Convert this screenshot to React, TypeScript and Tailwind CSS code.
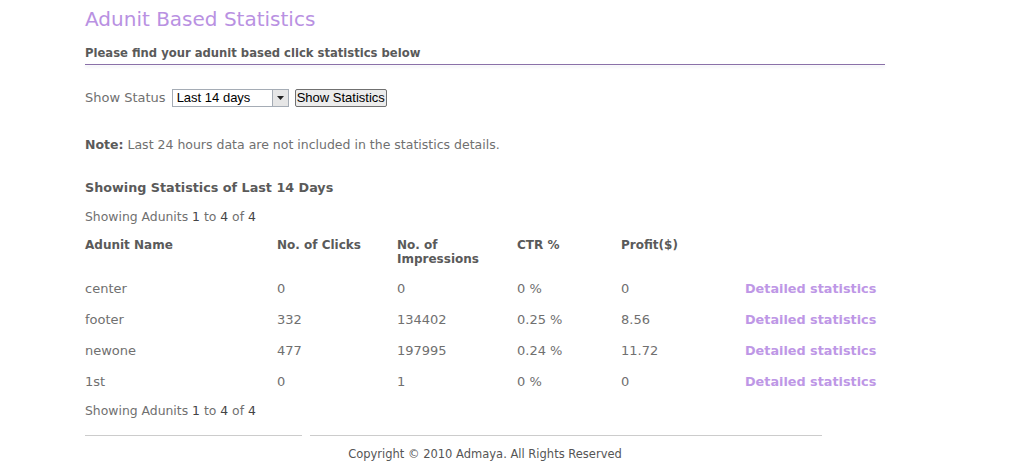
import React from 'react';

const rows = [
  { name: 'center', clicks: '0', imps: '0', ctr: '0 %', profit: '0' },
  { name: 'footer', clicks: '332', imps: '134402', ctr: '0.25 %', profit: '8.56' },
  { name: 'newone', clicks: '477', imps: '197995', ctr: '0.24 %', profit: '11.72' },
  { name: '1st', clicks: '0', imps: '1', ctr: '0 %', profit: '0' },
];

function App() {
  return (
    <div className="min-h-screen bg-white text-[13px] text-[#707070]" style={{ fontFamily: '"DejaVu Sans", Verdana, sans-serif' }}>
      <div className="w-[800px] ml-[85px]">
        <h1 className="pt-[6px] text-[20px] leading-[26px] text-[#b991e2]">Adunit Based Statistics</h1>
        <h2 className="mt-[13px] text-[11.6px] leading-[16px] font-bold text-[#5a5a5a]">Please find your adunit based click statistics below</h2>
        <div className="mt-[3px] h-px bg-[#8a70a8] shadow-[0_2px_3px_#e0e0ec]" />

        <div className="mt-[24px] flex items-center h-[18px]">
          <span>Show Status</span>
          <div className="ml-[6px] flex items-center w-[117px] h-[18px] border border-[#a5acb5] bg-white">
            <span className="flex-1 pl-[4px] text-[13px] text-black" style={{ fontFamily: '"Liberation Sans", Arial, sans-serif' }}>Last 14 days</span>
            <span className="w-[16px] h-[16px] flex items-center justify-center bg-[#e6e6e6] border-l border-[#a5acb5]">
              <svg width="7" height="4" viewBox="0 0 7 4"><path d="M0 0h7L3.5 4z" fill="#222" /></svg>
            </span>
          </div>
          <button className="ml-[6px] h-[18px] px-[1px] border border-[#707070] rounded-[2px] bg-[#ececec] text-[13px] leading-[14px] text-black" style={{ fontFamily: '"Liberation Sans", Arial, sans-serif' }}>Show Statistics</button>
        </div>

        <p className="mt-[29px] text-[12.5px] leading-[18px]"><b className="text-[#5a5a5a]">Note:</b> Last 24 hours data are not included in the statistics details.</p>

        <h3 className="mt-[25px] text-[12.75px] leading-[18px] font-bold text-[#5a5a5a]">Showing Statistics of Last 14 Days</h3>
        <p className="mt-[11px] text-[12.4px] leading-[18px]">Showing Adunits <span className="text-[#444]">1</span> to <span className="text-[#444]">4</span> of <span className="text-[#444]">4</span></p>

        <div className="mt-[12px] grid grid-cols-[192px_120px_120px_104px_124px_1fr] font-bold text-[12px] leading-[14px] text-[#5a5a5a]">
          <div>Adunit Name</div>
          <div>No. of Clicks</div>
          <div>No. of<br />Impressions</div>
          <div>CTR %</div>
          <div>Profit($)</div>
          <div />
        </div>

        <div className="mt-[7px]">
          {rows.map((r) => (
            <div key={r.name} className="grid grid-cols-[192px_120px_120px_104px_124px_1fr] h-[31px] items-center">
              <div>{r.name}</div>
              <div>{r.clicks}</div>
              <div>{r.imps}</div>
              <div>{r.ctr}</div>
              <div>{r.profit}</div>
              <div className="font-bold text-[12.8px] text-[#be97e6]">Detailed statistics</div>
            </div>
          ))}
        </div>

        <p className="mt-[5px] text-[12.4px] leading-[18px]">Showing Adunits <span className="text-[#444]">1</span> to <span className="text-[#444]">4</span> of <span className="text-[#444]">4</span></p>

        <div className="mt-[15px] flex gap-[8px]">
          <div className="w-[217px] h-px bg-[#cccccc]" />
          <div className="w-[512px] h-px bg-[#cccccc]" />
        </div>
        <p className="mt-[10px] text-center text-[11.5px] leading-[16px] text-[#555]">Copyright © 2010 Admaya. All Rights Reserved</p>
      </div>
    </div>
  );
}

export default App;
